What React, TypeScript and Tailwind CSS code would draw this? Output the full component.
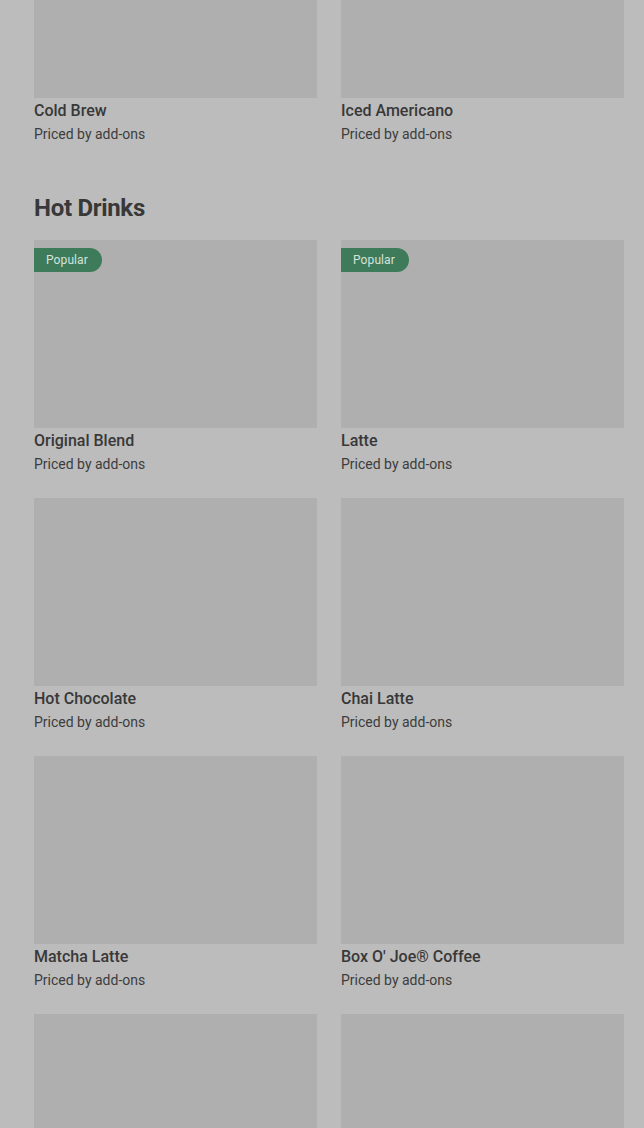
import React from "react";

type Item = { name: string; popular?: boolean; imageOnly?: boolean };

function Card({ item }: { item: Item }) {
  return (
    <div className="flex flex-col">
      <div className="relative h-[188px] bg-[#afafaf]">
        {item.popular && (
          <div className="absolute left-0 top-2 flex h-6 items-center rounded-r-full bg-[#3d7b5b] pl-3 pr-[14px] text-[12px] leading-none tracking-[0.1px] text-[#d6e3dc]">
            Popular
          </div>
        )}
      </div>
      {!item.imageOnly && (
        <>
          <div className="pt-[1px] text-[16px] font-medium leading-6 text-[#383838]">{item.name}</div>
          <div className="pt-[1px] text-[14px] leading-5 text-[#3c3c3c]">Priced by add-ons</div>
        </>
      )}
    </div>
  );
}

export default function App() {
  const hot: Item[] = [
    { name: "Original Blend", popular: true },
    { name: "Latte", popular: true },
    { name: "Hot Chocolate" },
    { name: "Chai Latte" },
    { name: "Matcha Latte" },
    { name: "Box O' Joe® Coffee" },
    { name: "", imageOnly: true },
    { name: "", imageOnly: true },
  ];
  return (
    <div
      className="h-[1128px] overflow-hidden bg-[#bcbcbc] pl-[34px] pr-[20px]"
      style={{ fontFamily: "Roboto, 'Noto Sans', sans-serif" }}
    >
      <div className="-mt-[90px] grid grid-cols-2 gap-x-6">
        <Card item={{ name: "Cold Brew" }} />
        <Card item={{ name: "Iced Americano" }} />
      </div>
      <h2 className="mt-[48px] text-[24px] font-bold leading-8 tracking-[-0.3px] text-[#383838]">Hot Drinks</h2>
      <div className="mt-4 grid grid-cols-2 gap-x-6 gap-y-[24px]">
        {hot.map((it, i) => (
          <Card key={i} item={it} />
        ))}
      </div>
    </div>
  );
}
